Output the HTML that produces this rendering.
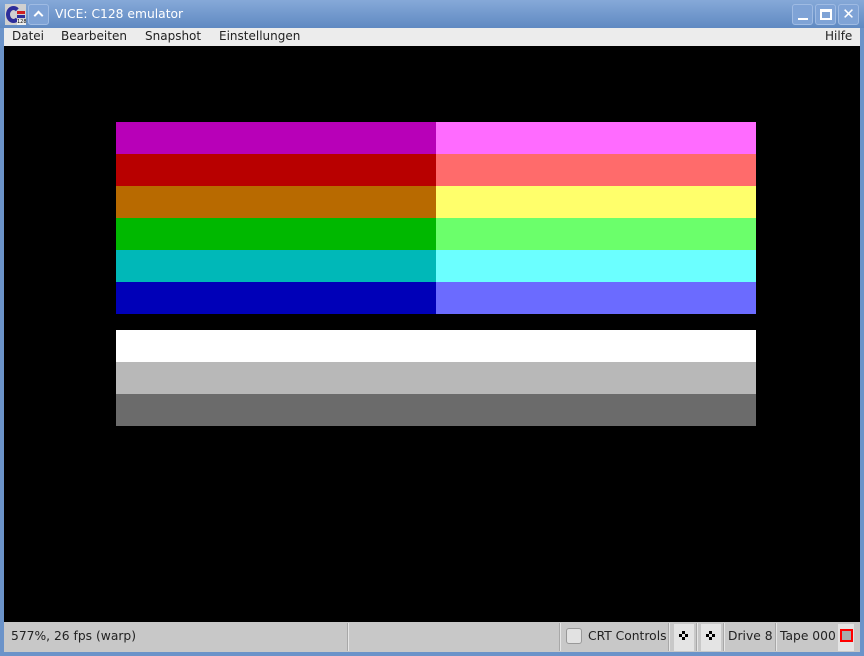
<!DOCTYPE html>
<html><head><meta charset="utf-8"><style>
*{margin:0;padding:0;box-sizing:border-box}
body{width:864px;height:656px;background:#6b93c9;font-family:"DejaVu Sans","Liberation Sans",sans-serif;position:relative;overflow:hidden}
.abs{position:absolute}
#title{left:0;top:0;width:864px;height:28px;background:linear-gradient(#86a9d8,#5f89c2)}
.btn{position:absolute;top:4px;width:21px;height:21px;border:1px solid #9fbbe3;border-radius:3px;background:#7fa3d6;color:#fff;text-align:center}
#menu{left:4px;top:28px;width:856px;height:18px;background:#ececec;font-size:12px;color:#222}
#menu span{position:absolute;top:1px}
#screen{left:4px;top:46px;width:856px;height:576px;background:#000}
#status{left:4px;top:622px;width:856px;height:30px;background:#c8c8c8;font-size:12.3px;color:#222}
.sep{position:absolute;top:1px;width:2px;height:28px;border-left:1px solid #a8a8a8;border-right:1px solid #e6e6e6}
.joy{position:absolute;top:2px;width:20px;height:27px;background:#e4e4e4}
.joy i{position:absolute;background:#000;width:3px;height:3px}
</style></head><body>
<div id="title" class="abs">
 <div class="abs" style="left:5px;top:4px;width:21px;height:21px;background:#d0d0d0">
  <div class="abs" style="left:1px;top:2px;width:15px;height:17px;border:4px solid #2d2d9a;border-right-color:transparent;border-radius:50%"></div>
  <div class="abs" style="left:12px;top:7px;width:8px;height:3px;background:#d02020"></div>
  <div class="abs" style="left:12px;top:11px;width:8px;height:3px;background:#2d2d9a"></div>
  <div class="abs" style="left:12px;top:15px;width:9px;height:6px;font-size:5px;color:#000;background:#eee">128</div>
 </div>
 <div class="btn" style="left:28px"><div class="abs" style="left:6px;top:7px;width:7px;height:7px;border-left:2px solid #fff;border-top:2px solid #fff;transform:rotate(45deg)"></div></div>
 <div class="abs" style="left:55px;top:7px;color:#fff;font-size:12.3px">VICE: C128 emulator</div>
 <div class="btn" style="left:792px"><div class="abs" style="left:5px;top:13px;width:10px;height:2px;background:#fff"></div></div>
 <div class="btn" style="left:815px"><div class="abs" style="left:4px;top:4px;width:12px;height:11px;border:2px solid #fff;border-top-width:3px"></div></div>
 <div class="btn" style="left:838px;font-size:15px;line-height:19px;font-weight:bold">✕</div>
</div>
<div id="menu" class="abs">
 <span style="left:8px">Datei</span><span style="left:57px">Bearbeiten</span><span style="left:141px">Snapshot</span><span style="left:215px">Einstellungen</span><span style="left:821px">Hilfe</span>
</div>
<div id="screen" class="abs"></div>
<div class="abs" style="left:116px;top:122px;width:320px;height:32px;background:#b800b8"></div>
<div class="abs" style="left:116px;top:154px;width:320px;height:32px;background:#b80000"></div>
<div class="abs" style="left:116px;top:186px;width:320px;height:32px;background:#b86a00"></div>
<div class="abs" style="left:116px;top:218px;width:320px;height:32px;background:#00b800"></div>
<div class="abs" style="left:116px;top:250px;width:320px;height:32px;background:#00b8b8"></div>
<div class="abs" style="left:116px;top:282px;width:320px;height:32px;background:#0000b8"></div>
<div class="abs" style="left:436px;top:122px;width:320px;height:32px;background:#ff6bff"></div>
<div class="abs" style="left:436px;top:154px;width:320px;height:32px;background:#ff6b6b"></div>
<div class="abs" style="left:436px;top:186px;width:320px;height:32px;background:#ffff6b"></div>
<div class="abs" style="left:436px;top:218px;width:320px;height:32px;background:#6bff6b"></div>
<div class="abs" style="left:436px;top:250px;width:320px;height:32px;background:#6bffff"></div>
<div class="abs" style="left:436px;top:282px;width:320px;height:32px;background:#6b6bff"></div>
<div class="abs" style="left:116px;top:330px;width:640px;height:32px;background:#ffffff"></div>
<div class="abs" style="left:116px;top:362px;width:640px;height:32px;background:#b8b8b8"></div>
<div class="abs" style="left:116px;top:394px;width:640px;height:32px;background:#6b6b6b"></div>
<div id="status" class="abs">
 <div class="abs" style="left:7px;top:7px">577%, 26 fps (warp)</div>
 <div class="sep" style="left:343px"></div>
 <div class="sep" style="left:555px"></div>
 <div class="abs" style="left:562px;top:6px;width:16px;height:16px;border:1px solid #999;border-radius:3px;background:#e2e2e2"></div>
 <div class="abs" style="left:584px;top:7px">CRT Controls</div>
 <div class="sep" style="left:664px"></div>
 <div class="joy" style="left:670px"><i style="left:8px;top:7px"></i><i style="left:5px;top:10px"></i><i style="left:11px;top:10px"></i><i style="left:8px;top:13px"></i></div>
 <div class="sep" style="left:692px"></div>
 <div class="joy" style="left:697px"><i style="left:8px;top:7px"></i><i style="left:5px;top:10px"></i><i style="left:11px;top:10px"></i><i style="left:8px;top:13px"></i></div>
 <div class="sep" style="left:719px"></div>
 <div class="abs" style="left:724px;top:7px">Drive 8</div>
 <div class="sep" style="left:771px"></div>
 <div class="abs" style="left:776px;top:7px">Tape 000</div>
 <div class="abs" style="left:834px;top:2px;width:16px;height:27px;background:#e4e4e4"></div>
 <div class="abs" style="left:836px;top:7px;width:13px;height:13px;border:2px solid #f00;background:#aaa"></div>
</div>
</body></html>
